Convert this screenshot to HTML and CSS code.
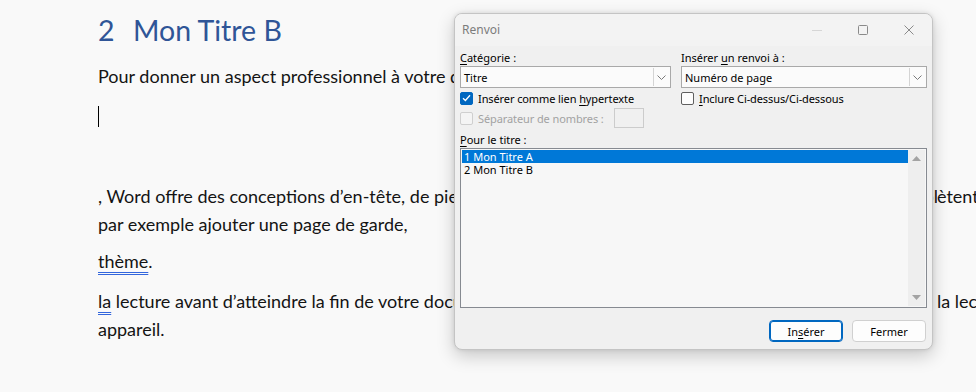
FILE: index.html
```html
<!DOCTYPE html>
<html lang="fr">
<head>
<meta charset="utf-8">
<title>Renvoi</title>
<link rel="stylesheet" href="styles.css">
</head>
<body>
<div class="doc">
  <h1 class="h1"><span class="num">2</span>Mon Titre B</h1>
  <p class="para split"><span class="lt short">Pour donner un aspect professionnel à votre document, Word offre des conceptions d’en-tête, de pied de page</span></p>
  <p class="para"><span class="caret"></span></p>
  <p class="para"></p>
  <div class="para tight">
    <div class="split"><span class="lt">, Word offre des conceptions d’en-tête, de pied de page, de page de garde et de zone de texte qui se compl</span><span class="rt">ètent mutuellement</span></div>
    <div class="split"><span class="lt">par exemple ajouter une page de garde,</span></div>
  </div>
  <p class="para"><span class="gram">thème</span>.</p>
  <div class="para">
    <div class="split"><span class="lt"><span class="gram">la</span> lecture avant d’atteindre la fin de votre document, Word se souvient de l’endroit où vous en étiez</span><span class="rt">la lecture</span></div>
    <div class="split"><span class="lt">appareil.</span></div>
  </div>
</div>

<div class="dialog">
  <div class="titlebar">
    <span class="title">Renvoi</span>
    <div class="controls">
      <span class="ctl"><svg width="10" height="10" viewBox="0 0 10 10"><path d="M0 5.5H10" stroke="#d6d6d6" stroke-width="1"/></svg></span>
      <span class="ctl"><svg width="10" height="10" viewBox="0 0 10 10"><rect x="0.5" y="0.5" width="9" height="9" rx="1" fill="none" stroke="#8a8a8a" stroke-width="1"/></svg></span>
      <span class="ctl"><svg width="10" height="10" viewBox="0 0 10 10"><path d="M0.5 0.5L9.5 9.5M9.5 0.5L0.5 9.5" stroke="#8a8a8a" stroke-width="1"/></svg></span>
    </div>
  </div>
  <div class="body">
    <div class="cols">
      <div class="col">
        <div class="lbl"><u>C</u>atégorie :</div>
        <div class="select"><span class="val">Titre</span><span class="drop"><svg width="9" height="5" viewBox="0 0 9 5"><path d="M0.5 0.5L4.5 4.5L8.5 0.5" fill="none" stroke="#7a7a7a" stroke-width="1"/></svg></span></div>
        <div class="chkrow">
          <span class="chk on"><svg width="9" height="8" viewBox="0 0 9 8"><path d="M1 4.2L3.4 6.5L8 1.2" fill="none" stroke="#fff" stroke-width="1.3"/></svg></span>
          <span>Insérer comme lien <u>h</u>ypertexte</span>
        </div>
        <div class="chkrow dis">
          <span class="chk off"></span>
          <span>Séparateur de nombres :</span>
          <span class="numbox"></span>
        </div>
      </div>
      <div class="col">
        <div class="lbl">Insérer <u>u</u>n renvoi à :</div>
        <div class="select"><span class="val">Numéro de page</span><span class="drop"><svg width="9" height="5" viewBox="0 0 9 5"><path d="M0.5 0.5L4.5 4.5L8.5 0.5" fill="none" stroke="#7a7a7a" stroke-width="1"/></svg></span></div>
        <div class="chkrow">
          <span class="chk"></span>
          <span><u>I</u>nclure Ci-dessus/Ci-dessous</span>
        </div>
      </div>
    </div>
    <div class="lbl lbl2"><u>P</u>our le titre :</div>
    <div class="list">
      <div class="items">
        <div class="item sel">1 Mon Titre A</div>
        <div class="item">2 Mon Titre B</div>
      </div>
      <div class="scroll">
        <svg width="9" height="5" viewBox="0 0 9 5"><path d="M0 5L4.5 0L9 5Z" fill="#a3a3a3"/></svg>
        <svg width="9" height="5" viewBox="0 0 9 5"><path d="M0 0L4.5 5L9 0Z" fill="#a3a3a3"/></svg>
      </div>
    </div>
    <div class="buttons">
      <button class="btn def">In<u>s</u>érer</button>
      <button class="btn">Fermer</button>
    </div>
  </div>
</div>
</body>
</html>
```

FILE: styles.css
```css
html, body {
  margin: 0;
  padding: 0;
}
body {
  width: 976px;
  height: 392px;
  overflow: hidden;
  position: relative;
  background: #f9f9f9;
  font-family: Lato, "Liberation Sans", sans-serif;
  color: #141414;
}
.doc {
  padding: 13px 0 0 98px;
  width: 878px;
  overflow: hidden;
}
.h1 {
  margin: 0 0 15px 0;
  font-family: Lato, sans-serif;
  font-weight: 400;
  font-size: 28.5px;
  line-height: 34px;
  color: #2f5597;
}
.num {
  display: inline-block;
  width: 35px;
}
.para {
  margin: 0 0 12px 0;
  font-size: 18px;
  line-height: 28px;
  min-height: 28px;
}
.para.tight {
  margin-bottom: 9px;
}
.split {
  display: flex;
  white-space: nowrap;
  overflow: hidden;
}
.lt {
  width: 839px;
  overflow: hidden;
  flex: none;
}
.lt.short {
  width: 800px;
}
.rt {
  flex: none;
}
.caret {
  display: inline-block;
  width: 1px;
  height: 21px;
  background: #000;
  vertical-align: -4px;
}
.gram {
  text-decoration-line: underline;
  text-decoration-style: double;
  text-decoration-color: #3366dd;
  text-underline-offset: 4px;
  text-decoration-thickness: 1px;
}

/* dialog */
.dialog {
  position: absolute;
  left: 454px;
  top: 13px;
  width: 477px;
  height: 335px;
  border: 1px solid #c4c4c4;
  border-radius: 8px;
  background: #f0f0f0;
  box-shadow: 0 6px 18px rgba(0,0,0,0.20), 0 0 4px rgba(0,0,0,0.10);
  font-family: "Noto Sans", sans-serif;
  font-size: 11px;
  color: #000;
  display: flex;
  flex-direction: column;
  overflow: hidden;
}
.titlebar {
  height: 32px;
  flex: none;
  background: #f3f3f3;
  display: flex;
  align-items: center;
  padding-left: 7px;
}
.title {
  font-size: 12px;
  color: #7c7c7c;
  margin-top: -1px;
}
.controls {
  margin-left: auto;
  display: flex;
  height: 100%;
}
.ctl {
  width: 46px;
  display: flex;
  align-items: center;
  justify-content: center;
}
.body {
  padding: 5px 5px 0 5px;
  display: flex;
  flex-direction: column;
}
.cols {
  display: grid;
  grid-template-columns: 211px 246px;
  column-gap: 10px;
}
.col {
  display: flex;
  flex-direction: column;
}
.lbl {
  height: 14px;
  line-height: 14px;
  margin-bottom: 1px;
  white-space: nowrap;
}
.lbl u, .chkrow u, .btn u {
  text-decoration-thickness: 1px;
  text-underline-offset: 2px;
}
.select {
  height: 22px;
  box-sizing: border-box;
  border: 1px solid #a9a9a9;
  background: #fbfbfb;
  display: flex;
  align-items: center;
}
.val {
  flex: 1;
  padding-left: 3px;
  white-space: nowrap;
}
.drop {
  width: 15px;
  height: 18px;
  margin-right: 1px;
  border-left: 1px solid #d4d4d4;
  display: flex;
  align-items: center;
  justify-content: center;
}
.chkrow {
  height: 20px;
  display: flex;
  align-items: center;
  gap: 5px;
  white-space: nowrap;
  letter-spacing: -0.1px;
}
.chk {
  width: 13px;
  height: 13px;
  box-sizing: border-box;
  border: 1px solid #5f5f5f;
  border-radius: 2px;
  background: #fdfdfd;
  display: flex;
  align-items: center;
  justify-content: center;
  flex: none;
}
.chk.on {
  background: #0067c0;
  border-color: #0067c0;
}
.chk.off {
  border-color: #cfcfcf;
  background: #f4f4f4;
}
.chkrow.dis {
  color: #a2a2a2;
}
.numbox {
  width: 30px;
  height: 20px;
  box-sizing: border-box;
  border: 1px solid #cccccc;
  background: #f0f0f0;
  margin-left: 5px;
}
.lbl2 {
  margin-top: 5px;
}
.list {
  height: 160px;
  box-sizing: border-box;
  border: 1px solid #868a91;
  background: #f7f7f7;
  display: flex;
  padding: 1px;
}
.items {
  flex: 1;
}
.item {
  height: 13px;
  line-height: 13px;
  padding-left: 2px;
  white-space: nowrap;
}
.item.sel {
  background: #0078d7;
  color: #fff;
}
.scroll {
  width: 17px;
  background: #eeeeee;
  display: flex;
  flex-direction: column;
  align-items: center;
  justify-content: space-between;
  padding: 6px 0 6px 0;
}
.buttons {
  margin-top: 12px;
  display: flex;
  justify-content: flex-end;
  gap: 9px;
  padding-right: 1px;
}
.btn {
  width: 74px;
  height: 22px;
  box-sizing: border-box;
  border: 1px solid #d0d0d0;
  border-radius: 4px;
  background: #fdfdfd;
  font-family: "Noto Sans", sans-serif;
  font-size: 11px;
  color: #000;
  padding: 0;
}
.btn.def {
  border: 1px solid #0067c0;
  box-shadow: inset 0 0 0 1px #0067c0;
}
```
